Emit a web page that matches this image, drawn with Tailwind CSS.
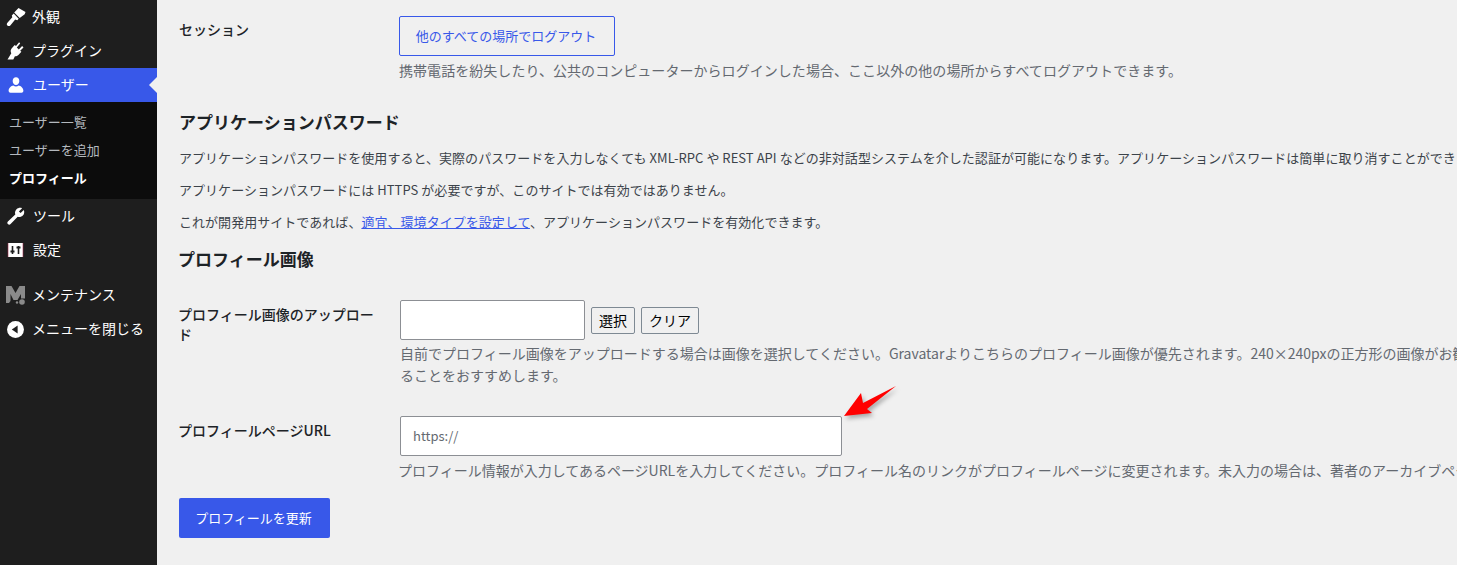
<!DOCTYPE html>
<html lang="ja">
<head>
<meta charset="utf-8">
<title>プロフィール</title>
<script src="https://cdn.jsdelivr.net/npm/@tailwindcss/browser@4"></script>
</head>
<body class="m-0 h-[565px] w-[1457px] overflow-hidden bg-[#f0f0f0] font-['Noto_Sans_CJK_JP','Noto_Sans',sans-serif] text-[14px] text-[#1d2327]">
<div class="flex h-[565px] w-[1457px] overflow-hidden">
  <aside class="flex h-full w-[157px] shrink-0 flex-col bg-[#1e1e1e] text-white">
    <a class="flex h-[34px] items-center pl-[6px]">
      <svg class="mr-[6px] h-[20px] w-[20px]" viewBox="0 0 20 20" fill="#fff"><path d="M12.500 1 19.500 5l-.8 2.200-5 3.800-5.500-5.500zM7.700 6.500 12.700 11.800 11.300 13.300 9.200 12.500 4.300 18.500c-.8.800-2.100.8-2.900 0-.7-.7-.8-1.700-.2-2.500L6.300 10.300 5.800 8.500z"/></svg>
      <span class="pb-[2px]">外観</span>
    </a>
    <a class="flex h-[34px] items-center pl-[6px]">
      <svg class="mr-[6px] h-[20px] w-[20px]" viewBox="0 0 20 20" fill="#fff"><path d="M13.100 1.300 10 5.100l-1.300-1L5.600 7.500c-1.200 1.400-1.200 3.300-.3 4.800L1.500 18.500h5.800l1.600-3.200c1.300.1 2.600-.4 3.500-1.400l3-3.200-1.200-1 3.300-3.300-1.400-1.300-3.300 3.300-2-1.800 3.400-4.200z"/></svg>
      <span class="pb-[2px]">プラグイン</span>
    </a>
    <a class="relative flex h-[34px] items-center bg-[#3858e9] pl-[7px]">
      <svg class="mr-[8px] h-[18px] w-[18px]" viewBox="0 0 20 20" fill="#fff"><path d="M10 1.500c-2.200 0-3.700 1.700-3.700 4s1.500 4.500 3.700 4.500 3.700-2.200 3.700-4.500-1.500-4-3.700-4zM1.800 16.500c0-3.300 3-5.500 5.200-6 .9.800 1.900 1.200 3 1.200s2.100-.4 3-1.200c2.200.5 5.200 2.700 5.200 6 0 1.500-1 2-2 2H3.800c-1 0-2-.5-2-2z"/></svg>
      <span class="pb-[2px]">ユーザー</span>
      <span class="absolute right-0 top-[9px] h-0 w-0 border-y-[8px] border-r-[8px] border-y-transparent border-r-[#f0f0f0]"></span>
    </a>
    <div class="flex h-[97px] flex-col bg-[#0c0c0c] pt-[6px] pl-[9px] text-[13px] leading-[28px] text-[#b4b9be]">
      <a>ユーザー一覧</a>
      <a>ユーザーを追加</a>
      <a class="font-bold text-white">プロフィール</a>
    </div>
    <a class="flex h-[34px] items-center pl-[6px]">
      <svg class="mr-[7px] h-[20px] w-[20px]" viewBox="0 0 20 20" fill="#fff"><path d="M17.800 3.900 14.600 7.100 12.900 5.400l3.200-3.200C14.300 1.400 12 1.800 10.500 3.300 9.100 4.700 8.700 6.700 9.300 8.400L1.900 15.500c-.8.800-.8 1.900 0 2.600.8.800 1.900.8 2.700 0l7.100-7.300c1.700.6 3.700.2 5.100-1.200 1.500-1.500 1.800-3.800 1-5.700z"/></svg>
      <span class="pb-[2px]">ツール</span>
    </a>
    <a class="flex h-[34px] items-center pl-[7px]">
      <svg class="mr-[8px] h-[18px] w-[18px]" viewBox="0 0 18 18"><rect x="1" y="2" width="15" height="14" fill="#fff"/><path d="M5.500 5v8M11.500 5v8" stroke="#1e1e1e" stroke-width="1.600"/><path d="M3.500 10.500h4M9.500 6.500h4" stroke="#1e1e1e" stroke-width="1.800"/><path d="M1 2v14M16 2v14" stroke="#a0284a" stroke-width=".6"/></svg>
      <span class="pb-[2px]">設定</span>
    </a>
    <a class="mt-[11px] flex h-[34px] items-center pl-[6px]">
      <svg class="mr-[8px] h-[19px] w-[19px]" viewBox="0 0 19 19" fill="#8a8a8a"><path d="M0 0h5.500l4 7 4-7H19v12.500h-4V8L11.500 14h-4L4.500 8V15L3 17H0z"/><circle cx="16" cy="16" r="2.800"/><circle cx="11" cy="16.500" r="1.200"/></svg>
      <span class="-ml-px pb-[2px]">メンテナンス</span>
    </a>
    <a class="flex h-[34px] items-center pl-[6px]">
      <svg class="mr-[7px] h-[19px] w-[19px]" viewBox="0 0 18 18"><circle cx="9" cy="9" r="8" fill="#fff"/><path d="M5.500 9l5.500-3.800v7.600z" fill="#1e1e1e"/></svg>
      <span class="pb-[2px]">メニューを閉じる</span>
    </a>
  </aside>

  <main class="relative min-w-0 flex-1 overflow-hidden pl-[22px] whitespace-nowrap">
    <section class="flex pt-[16px]">
      <div class="w-[220px] shrink-0 pt-[1px] font-medium leading-[24px]">セッション</div>
      <div>
        <button class="flex h-[40px] w-[216px] items-center justify-center rounded-[2px] border border-[#3858e9] pr-[2px] text-[13px] text-[#3858e9]">他のすべての場所でログアウト</button>
        <p class="mt-[3px] leading-[22px] tracking-[0.05px] text-[#646970]">携帯電話を紛失したり、公共のコンピューターからログインした場合、ここ以外の他の場所からすべてログアウトできます。</p>
      </div>
    </section>

    <h2 class="mt-[28px] text-[17px] font-bold leading-[26px]">アプリケーションパスワード</h2>
    <p class="mt-[12px] text-[13px] leading-[22px] tracking-[0.04px] text-[#3c434a]">アプリケーションパスワードを使用すると、実際のパスワードを入力しなくても XML-RPC や REST API などの非対話型システムを介した認証が可能になります。アプリケーションパスワードは簡単に取り消すことができます。</p>
    <p class="mt-[10px] text-[13px] leading-[22px] tracking-[0.04px] text-[#3c434a]">アプリケーションパスワードには HTTPS が必要ですが、このサイトでは有効ではありません。</p>
    <p class="mt-[10px] text-[13px] leading-[22px] tracking-[0.04px] text-[#3c434a]">これが開発用サイトであれば、<a class="text-[#3858e9] underline">適宜、環境タイプを設定して</a>、アプリケーションパスワードを有効化できます。</p>

    <h2 class="-ml-px mt-[13px] text-[17px] font-bold leading-[26px]">プロフィール画像</h2>

    <section class="mt-[28px] flex">
      <div class="-ml-px w-[221px] shrink-0 whitespace-normal pt-[4px] pr-[20px] font-medium leading-[20px]">プロフィール画像のアップロード</div>
      <div class="pl-px">
        <div class="flex items-center">
          <div class="h-[40px] w-[185px] rounded-[2px] border border-[#8c8f94] bg-white"></div>
          <button class="ml-[6px] h-[27px] w-[44px] rounded-[2px] border border-[#7e8993] text-black">選択</button>
          <button class="ml-[6px] h-[27px] w-[58px] rounded-[2px] border border-[#7e8993] text-black">クリア</button>
        </div>
        <p class="mt-[2px] leading-[22px] text-[#646970]">自前でプロフィール画像をアップロードする場合は画像を選択してください。Gravatarよりこちらのプロフィール画像が優先されます。240×240pxの正方形の画像がお勧めです。<br>ることをおすすめします。</p>
      </div>
    </section>

    <section class="mt-[30px] flex">
      <div class="-ml-px w-[221px] shrink-0 pt-[3px] font-medium leading-[22px]">プロフィールページURL</div>
      <div>
        <div class="ml-px flex h-[40px] w-[442px] items-center rounded-[2px] border border-[#8c8f94] bg-white pl-[12px] text-[13px] text-[#646970]">https://</div>
        <p class="mt-[3px] -ml-px leading-[22px] text-[#646970]">プロフィール情報が入力してあるページURLを入力してください。プロフィール名のリンクがプロフィールページに変更されます。未入力の場合は、著者のアーカイブページにリンクします。</p>
      </div>
    </section>

    <button class="mt-[17px] block h-[40px] w-[151px] rounded-[2px] bg-[#3858e9] pr-[2px] text-[13px] text-white">プロフィールを更新</button>

    <svg class="absolute left-[684px] top-[384px] h-[36px] w-[58px] drop-shadow-[2px_3px_2px_rgba(0,0,0,0.3)]" viewBox="0 0 58 36"><path d="M3 32 L20 9 L22 19 L55 2 L26 25 L31 29 Z" fill="#ff0000"/></svg>
  </main>
</div>
</body>
</html>
